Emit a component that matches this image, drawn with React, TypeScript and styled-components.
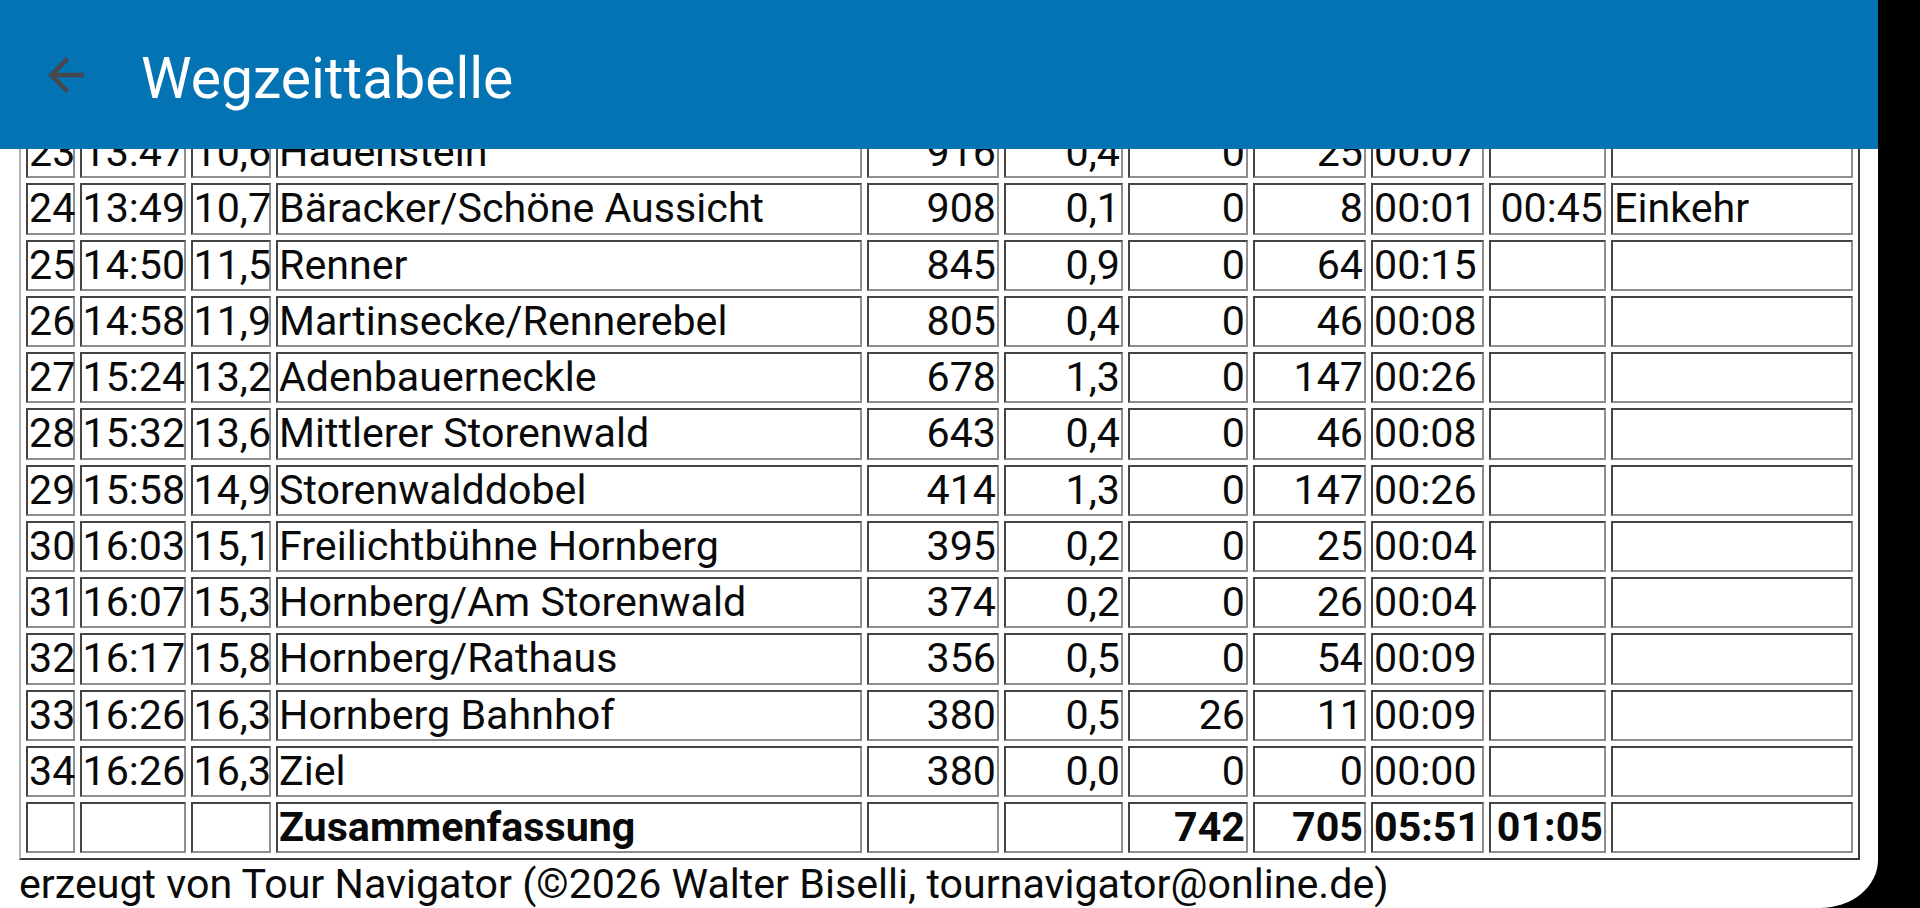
import React from "react";
import styled, { createGlobalStyle } from "styled-components";

const GlobalStyle = createGlobalStyle`
  html, body {
    margin: 0;
    padding: 0;
    background: #000;
  }
  body {
    font-family: Roboto, "Noto Sans", "Liberation Sans", sans-serif;
    overflow: hidden;
  }
`;

const Screen = styled.div`
  position: relative;
  width: 1878px;
  height: 908px;
  background: #fff;
  overflow: hidden;
  border-bottom-right-radius: 58px 48px;
`;

const AppBar = styled.header`
  position: absolute;
  top: 0;
  left: 0;
  right: 0;
  height: 149px;
  background: #0373b3;
  display: flex;
  align-items: center;
  z-index: 2;
`;

const BackButton = styled.button`
  border: none;
  background: none;
  padding: 0;
  margin: 0 48px 0 39px;
  width: 54px;
  height: 54px;
  display: flex;
  align-items: center;
  justify-content: center;
  color: #48474d;
  cursor: pointer;
`;

const Title = styled.h1`
  margin: 0;
  padding-top: 8px;
  font-size: 57px;
  font-weight: 400;
  color: #fff;
  letter-spacing: 0;
`;

const Content = styled.main`
  padding: 120px 18px 0 19px;
`;

const Table = styled.table`
  width: 100%;
  table-layout: fixed;
  border-collapse: separate;
  border-spacing: 5px 5px;
  border: 2px solid;
  border-color: #b4b4b4 #3c3c3c #3c3c3c #b4b4b4;
`;

const Cell = styled.td<{ $align?: "left" | "right"; $bold?: boolean }>`
  box-sizing: border-box;
  height: 51.25px;
  padding: 0 1px;
  border: 2px solid;
  border-color: #444 #8e8e8e #8e8e8e #444;
  font-size: 41.2px;
  line-height: 47px;
  color: #0a0a0a;
  white-space: nowrap;
  overflow: visible;
  text-align: ${(p) => p.$align ?? "left"};
  font-weight: ${(p) => (p.$bold ? 700 : 400)};
`;

const Footer = styled.p`
  margin: 0;
  font-size: 41.2px;
  line-height: 48px;
  color: #0a0a0a;
  white-space: nowrap;
`;

const widths = [48.5, 106, 80.5, 586, 132, 119, 120, 113, 112.5, 117.5];
const aligns: ("left" | "right")[] = [
  "right",
  "right",
  "right",
  "left",
  "right",
  "right",
  "right",
  "right",
  "left",
  "right",
  "left",
];

const rows: string[][] = [
  ["23", "13:47", "10,6", "Hauenstein", "916", "0,4", "0", "25", "00:07", "", ""],
  ["24", "13:49", "10,7", "Bäracker/Schöne Aussicht", "908", "0,1", "0", "8", "00:01", "00:45", "Einkehr"],
  ["25", "14:50", "11,5", "Renner", "845", "0,9", "0", "64", "00:15", "", ""],
  ["26", "14:58", "11,9", "Martinsecke/Rennerebel", "805", "0,4", "0", "46", "00:08", "", ""],
  ["27", "15:24", "13,2", "Adenbauerneckle", "678", "1,3", "0", "147", "00:26", "", ""],
  ["28", "15:32", "13,6", "Mittlerer Storenwald", "643", "0,4", "0", "46", "00:08", "", ""],
  ["29", "15:58", "14,9", "Storenwalddobel", "414", "1,3", "0", "147", "00:26", "", ""],
  ["30", "16:03", "15,1", "Freilichtbühne Hornberg", "395", "0,2", "0", "25", "00:04", "", ""],
  ["31", "16:07", "15,3", "Hornberg/Am Storenwald", "374", "0,2", "0", "26", "00:04", "", ""],
  ["32", "16:17", "15,8", "Hornberg/Rathaus", "356", "0,5", "0", "54", "00:09", "", ""],
  ["33", "16:26", "16,3", "Hornberg Bahnhof", "380", "0,5", "26", "11", "00:09", "", ""],
  ["34", "16:26", "16,3", "Ziel", "380", "0,0", "0", "0", "00:00", "", ""],
];

const summary = ["", "", "", "Zusammenfassung", "", "", "742", "705", "05:51", "01:05", ""];

const ArrowBack = () => (
  <svg width="54" height="54" viewBox="0 0 24 24" fill="currentColor" aria-hidden="true">
    <path d="M20 11H7.83l5.59-5.59L12 4l-8 8 8 8 1.41-1.41L7.83 13H20v-2z" />
  </svg>
);

export default function App() {
  return (
    <>
      <GlobalStyle />
      <Screen>
        <AppBar>
          <BackButton aria-label="Zurück">
            <ArrowBack />
          </BackButton>
          <Title>Wegzeittabelle</Title>
        </AppBar>
        <Content>
          <Table>
            <colgroup>
              {widths.map((w, i) => (
                <col key={i} style={{ width: `${w}px` }} />
              ))}
              <col />
            </colgroup>
            <tbody>
              {rows.map((r) => (
                <tr key={r[0]}>
                  {r.map((v, i) => (
                    <Cell key={i} $align={aligns[i]}>
                      {v}
                    </Cell>
                  ))}
                </tr>
              ))}
              <tr>
                {summary.map((v, i) => (
                  <Cell key={i} $align={aligns[i]} $bold>
                    {v}
                  </Cell>
                ))}
              </tr>
            </tbody>
          </Table>
          <Footer>erzeugt von Tour Navigator (©2026 Walter Biselli, tournavigator@online.de)</Footer>
        </Content>
      </Screen>
    </>
  );
}
